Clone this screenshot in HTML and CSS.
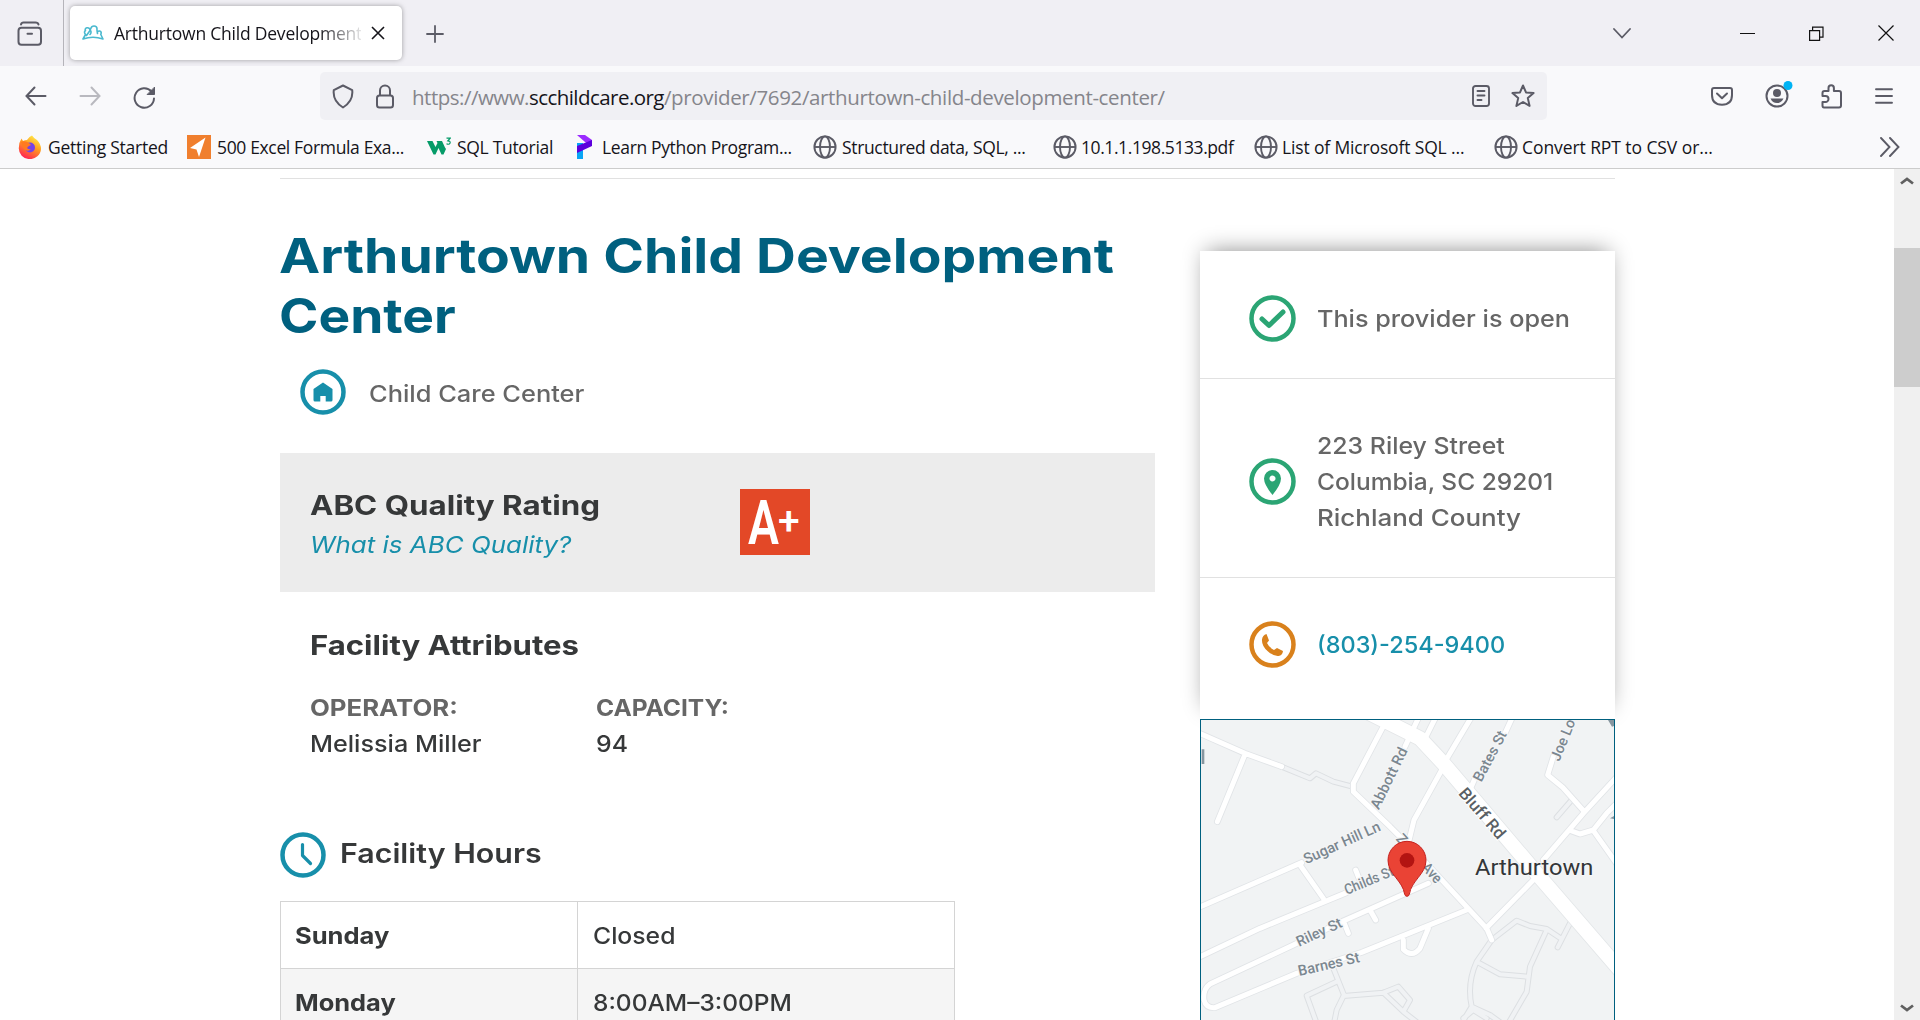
FILE: index.html
```html
<!DOCTYPE html>
<html lang="en">
<head>
<meta charset="utf-8">
<title>Arthurtown Child Development Center</title>
<link rel="stylesheet" href="styles.css">
</head>
<body>
<svg width="0" height="0" class="defs">
  <symbol id="globe" viewBox="0 0 24 24"><g fill="none" stroke="#5b5b66" stroke-width="1.9"><circle cx="12" cy="12" r="10.6"/><ellipse cx="12" cy="12" rx="5" ry="10.6"/><path d="M1.4 12h21.2"/></g></symbol>
</svg>
<header class="browser">
  <div class="tabs">
    <div class="recent"><svg width="26" height="26" viewBox="0 0 26 26" fill="none" stroke="#5b5b66" stroke-width="2" stroke-linecap="round"><path d="M4 3.600Q4.500 1.500 6.500 1.500H18.500Q21 1.500 21.500 3.600"/><rect x="1.500" y="6.800" width="22.500" height="17" rx="3"/><path d="M10.500 12.800h4.500"/></svg></div>
    <div class="tab">
      <svg width="22" height="16" viewBox="0 0 22 16" fill="none" stroke="#4bb9cf" stroke-width="1.600" stroke-linejoin="round" stroke-linecap="round"><path d="M1 14L3.500 9.500Q1.500 7 3.500 5.500 2.500 3.500 5 2.800 8 2.500 8 5.500L4.500 10.500M8 9.500Q9.500 8 8.800 6 7.800 5 8.800 3.500 9.500 1 12 1 15 1 15 3.800 14.800 5.500 15.500 8.500M15.500 8.500Q15 5.800 17.500 6 20 6.500 18.800 9.500L21 14Q11 10.500 1 14"/></svg>
      <span class="tab-title">Arthurtown Child Development</span>
      <svg width="14" height="14" viewBox="0 0 14 14" stroke="#15141a" stroke-width="1.600"><path d="M1 1L13 13M13 1L1 13"/></svg>
    </div>
    <svg class="plus" width="18" height="18" viewBox="0 0 18 18" stroke="#5b5b66" stroke-width="1.800" stroke-linecap="round"><path d="M9 1v16M1 9h16"/></svg>
    <div class="window-buttons">
      <svg class="chev" width="18" height="11" viewBox="0 0 18 11" fill="none" stroke="#5b5b66" stroke-width="1.800" stroke-linecap="round"><path d="M1 1L9 9.500 17 1"/></svg>
      <svg width="15" height="15" viewBox="0 0 15 15" stroke="#111"><path d="M0 7.500h15"/></svg>
      <svg width="15" height="15" viewBox="0 0 15 15" fill="none" stroke="#111" stroke-width="1.200"><path d="M.6 4.600h10v9.800h-10zM3.600 4.500V1.100h10.400v10h-3"/></svg>
      <svg width="16" height="16" viewBox="0 0 16 16" stroke="#111" stroke-width="1.200"><path d="M.5.5l15 15M15.500.5l-15 15"/></svg>
    </div>
  </div>
  <div class="toolbar">
    <svg width="22" height="20" viewBox="0 0 22 20" fill="none" stroke="#5b5b66" stroke-width="2" stroke-linecap="round"><path d="M9.500 1.500L1.500 10l8 8.500M2 10h18.500"/></svg>
    <svg class="dim" width="22" height="20" viewBox="0 0 22 20" fill="none" stroke="#5b5b66" stroke-width="2" stroke-linecap="round"><path d="M12.500 1.500l8 8.500-8 8.500M20 10H1.500"/></svg>
    <svg class="reload" width="23" height="23" viewBox="0 0 23 23" fill="none" stroke="#5b5b66" stroke-width="2" stroke-linecap="round"><path d="M18.500 5.500A9.700 9.700 0 1 0 21 12.500"/><path d="M21.500 1.500v7h-7z" fill="#5b5b66" stroke-width="1"/></svg>
    <div class="url">
      <svg width="22" height="25" viewBox="0 0 22 25" fill="none" stroke="#5b5b66" stroke-width="2" stroke-linejoin="round"><path d="M11 1.500L20.200 6.200Q21.500 17 11 23.500 .5 17 1.800 6.200z"/></svg>
      <svg class="lock" width="18" height="25" viewBox="0 0 18 25" fill="none" stroke="#5b5b66" stroke-width="2"><rect x="1" y="11.500" width="16" height="12" rx="2.500"/><path d="M4 11.500V6.500a5 5 0 0 1 10 0v5"/></svg>
      <div class="address"><span class="a1">https://www.</span><span class="a2">scchildcare.org</span><span class="a3">/provider/7692/arthurtown-child-development-center/</span></div>
      <svg width="18" height="22" viewBox="0 0 18 22" fill="none" stroke="#5b5b66" stroke-width="1.900" stroke-linecap="round"><rect x="1" y="1" width="16" height="20" rx="2.500"/><path d="M5.500 6h7M5.500 10.500h7M5.500 15h4"/></svg>
      <svg class="star" width="24" height="24" viewBox="0 0 24 24" fill="none" stroke="#5b5b66" stroke-width="2" stroke-linejoin="round"><path d="M12 1.500l3 6.900 7.600.7-5.800 5 1.800 7.800L12 18l-6.600 3.900 1.800-7.800-5.800-5 7.600-.7z"/></svg>
    </div>
    <svg width="22" height="19" viewBox="0 0 22 19" fill="none" stroke="#5b5b66" stroke-width="2" stroke-linecap="round" stroke-linejoin="round"><path d="M3 1h16q2 0 2 2v5q0 9.500-10 9.800Q1 17.500 1 8V3q0-2 2-2z"/><path d="M6 6.500l5 4.800 5-4.800"/></svg>
    <svg class="account" width="30" height="32" viewBox="0 0 30 32"><circle cx="12" cy="18" r="10.500" fill="none" stroke="#5b5b66" stroke-width="2"/><circle cx="12" cy="15" r="4" fill="#5b5b66"/><path d="M5.500 20.500h13q-2 4.500-6.500 4.500t-6.500-4.500z" fill="#5b5b66"/><circle cx="23" cy="7.500" r="4.500" fill="#00b3f4"/></svg>
    <svg class="puzzle" width="21" height="25" viewBox="0 0 21 25" fill="none" stroke="#5b5b66" stroke-width="2" stroke-linejoin="round"><path d="M1.500 11V9q0-2 2-2H7.500V4a2.700 2.700 0 0 1 5.400 0v3H18q2 0 2 2v12.500q0 2-2 2H3q-1.500 0-1.500-2V18h3a2.600 2.600 0 0 0 0-6h-3z"/></svg>
    <svg class="menu" width="18" height="16" viewBox="0 0 18 16" stroke="#5b5b66" stroke-width="1.900" stroke-linecap="round"><path d="M1 1.300h16M1 8h16M1 14.700h16"/></svg>
  </div>
  <nav class="bookmarks">
    <span class="bm b1"><svg viewBox="0 0 24 24"><defs><linearGradient id="ff" x1=".8" y1="0" x2=".3" y2="1"><stop offset="0" stop-color="#fff44f"/><stop offset=".45" stop-color="#ff9a1f"/><stop offset="1" stop-color="#ff1f55"/></linearGradient></defs><path d="M14 .5q2 3 5 4.500 4 4 4 9A11 10.500 0 0 1 .8 13Q1 7 3.500 3.500L5 6q2-1 4-1 2.500-4 5-4.500z" fill="url(#ff)"/><circle cx="12" cy="12.500" r="5" fill="#7542e5"/><path d="M3 7q4-2 8 1l2 2q-3 1-4 3 2 2 4 1-2 3-6 1-3-3-4-8z" fill="#ff7a20"/></svg>Getting Started</span>
    <span class="bm b2"><svg viewBox="0 0 24 24"><path fill="#f07f2e" d="M0 0h24v24H0z"/><path fill="#fff" d="M18.500 2.500L3 13l6.500 1.500L12 22z"/></svg>500 Excel Formula Exa...</span>
    <span class="bm b3"><svg viewBox="0 0 24 24"><path fill="#059b68" d="M0 6h5.500l3 6 2-4L9.500 6H15l3 6.500 1 1.500-2.500 5.500h-2L11.500 13 8.500 19.500h-2z"/><path d="M19.500 3.200h3.700l-2.300 2.600q2.600.2 2.200 2.200-.9 2-3.600.8" fill="none" stroke="#059b68" stroke-width="1.200"/></svg>SQL Tutorial</span>
    <span class="bm b4"><svg viewBox="0 0 24 24"><path fill="#09a5f5" d="M4 8h6v16H4z"/><path fill="#9b2bff" d="M4 0h8l7 5v6l-7-4z"/><path fill="#5c00dc" d="M4 11l15-6v6L4 18z"/></svg>Learn Python Program...</span>
    <span class="bm b5"><svg><use href="#globe"/></svg>Structured data, SQL, ...</span>
    <span class="bm b6"><svg><use href="#globe"/></svg>10.1.1.198.5133.pdf</span>
    <span class="bm b7"><svg><use href="#globe"/></svg>List of Microsoft SQL ...</span>
    <span class="bm b8"><svg><use href="#globe"/></svg>Convert RPT to CSV or...</span>
    <svg class="more" width="20" height="20" viewBox="0 0 20 20" fill="none" stroke="#5b5b66" stroke-width="1.900" stroke-linecap="round"><path d="M1 1l8.500 9L1 19M10 1l8.500 9L10 19"/></svg>
  </nav>
</header>
<div class="viewport">
  <div class="page">
    <main>
      <h1><span class="t1">Arthurtown Child Development</span><span class="t2">Center</span></h1>
      <div class="kind">
        <svg width="46" height="46" viewBox="0 0 46 46"><circle cx="23" cy="23" r="20.500" fill="none" stroke="#178faa" stroke-width="4.500"/><path fill="#178faa" d="M23 13.500l9.500 6.500v11q0 1.500-1.500 1.500h-5.300v-5.500h-5.400v5.500H15q-1.500 0-1.500-1.500V20z"/></svg>
        <span class="txt t3">Child Care Center</span>
      </div>
      <section class="rating">
        <div class="rating-text"><h2 class="t4">ABC Quality Rating</h2><a class="t5">What is ABC Quality?</a></div>
        <div class="badge"><span class="badge-a">A</span><span class="badge-plus">+</span></div>
      </section>
      <section class="attributes">
        <h2 class="t6">Facility Attributes</h2>
        <dl>
          <div class="attr"><dt class="t7">OPERATOR:</dt><dd class="t8">Melissia Miller</dd></div>
          <div class="attr"><dt class="t9">CAPACITY:</dt><dd class="t10">94</dd></div>
        </dl>
      </section>
      <section>
        <div class="hours-head">
          <svg width="46" height="46" viewBox="0 0 46 46" fill="none" stroke="#178faa"><circle cx="23" cy="23" r="20.500" stroke-width="4.500"/><path d="M22.500 12.500V23.500L30.500 31.500" stroke-width="3.200" stroke-linecap="round" stroke-linejoin="round"/></svg>
          <h2 class="t11">Facility Hours</h2>
        </div>
        <div class="hours">
          <div class="row"><div class="day"><span class="t12">Sunday</span></div><div class="time"><span class="t13">Closed</span></div></div>
          <div class="row alt"><div class="day"><span class="t14">Monday</span></div><div class="time"><span class="t15">8:00AM–3:00PM</span></div></div>
        </div>
      </section>
    </main>
    <aside>
      <div class="card">
        <div class="item i1"><svg width="47" height="47" viewBox="0 0 47 47" fill="none" stroke="#2ba574"><circle cx="23.500" cy="23.500" r="21" stroke-width="4.500"/><path d="M13 24l7 6.500L34 17" stroke-width="5" stroke-linecap="round" stroke-linejoin="round"/></svg><span class="t16">This provider is open</span></div>
        <div class="item i2"><svg width="47" height="47" viewBox="0 0 47 47"><circle cx="23.500" cy="23.500" r="21" stroke-width="4.500" fill="none" stroke="#2ba574"/><path fill="#2ba574" fill-rule="evenodd" d="M23.500 12a8.500 8.500 0 0 1 8.500 8.500q0 6-8.500 16.500Q15 26.500 15 20.500A8.500 8.500 0 0 1 23.500 12zm0 5.500a3 3 0 1 0 .01 0z"/></svg><div class="lines"><span class="t17">223 Riley Street</span><span class="t18">Columbia, SC 29201</span><span class="t19">Richland County</span></div></div>
        <div class="item i3"><svg width="47" height="47" viewBox="0 0 47 47"><circle cx="23.500" cy="23.500" r="21" stroke-width="4.500" fill="none" stroke="#d9811c"/><path fill="#d9811c" d="M17.500 13l2.500 6.500-2 2.500q2 4.500 7 7l3-2 6 3q-.5 4.500-4.500 5-5 .5-11-5t-5.500-11.500q.5-4.500 4.500-5.500z"/></svg><a class="t20">(803)-254-9400</a></div>
      </div>
      <div class="map">
        <svg width="413" height="300" viewBox="33 30 1239 900">
          <defs>
            <path id="streets" d="M20 66L165 130 275 170M165 133L82 335M582 45L490 220V245L600 350 700 450 890 655 905 690M687 20L645 110M738 20L703 90M845 20L768 150M758 175L672 330 655 400M968 20L945 70M855 205L842 235M1090 140L1073 195 1118 232 1183 305M1290 190L1180 310 1060 450M1035 505L888 655M1145 363L1170 372 1210 360 1250 310 1290 270M1210 362L1290 475M20 595L335 458M330 465L400 565M20 745L210 655 470 548M715 520L455 635 310 705 60 822Q38 838 42 870 48 895 75 893L320 790 515 727 830 600M540 600L557 630M463 640L475 670M497 480L507 505M715 655L690 715Q665 745 640 718V690"/>
            <path id="lanes" d="M275 170L360 205 378 190 430 215 487 230M905 690L980 632 1020 648 1070 657 1112 685M1145 630L1103 712M1070 660L1020 770 1010 845 955 940M905 690L860 755Q830 820 845 890L815 940M860 755L930 793 1012 800M845 890L900 915 935 940M820 925L850 900 890 925M430 775L462 855 440 900 432 940M440 815L350 857 380 940M460 858L580 848 625 830 660 870 640 905M580 848L640 905 685 940M1145 270L1100 322"/>
            <path id="bluff" d="M530 5Q590 35 690 85L760 160 1040 490 1290 780"/>
          </defs>
          <path fill="#f1f3f4" d="M0 0h1300v960H0z"/>
          <g fill="none" stroke-linejoin="round" stroke-linecap="round">
            <use href="#lanes" stroke="#dcdfe2" stroke-width="18"/><use href="#lanes" stroke="#f0f2f4" stroke-width="12"/>
            <use href="#streets" stroke="#e1e4e7" stroke-width="20"/><use href="#bluff" stroke="#e3e6e8" stroke-width="48"/>
            <use href="#streets" stroke="#fff" stroke-width="15"/><use href="#bluff" stroke="#fff" stroke-width="43"/>
          </g>
          <path fill="#8796a0" d="M35 118h8v44h-8zM1254 30h18v18l-6 2zM1260 325l12-7v9z"/>
          <g class="streetnames">
            <text transform="translate(349 463) rotate(-24.500)" textLength="248" lengthAdjust="spacingAndGlyphs">Sugar Hill Ln</text>
            <text transform="translate(566 301) rotate(-64)" textLength="200" lengthAdjust="spacingAndGlyphs">Abbott Rd</text>
            <text transform="translate(874 218) rotate(-62)" textLength="165" lengthAdjust="spacingAndGlyphs">Bates St</text>
            <text transform="translate(1108 156) rotate(-68)" textLength="131" lengthAdjust="spacingAndGlyphs">Joe Lo</text>
            <text transform="translate(470 555) rotate(-22.500)" textLength="157" lengthAdjust="spacingAndGlyphs">Childs St</text>
            <text transform="translate(327 711) rotate(-25)" textLength="146" lengthAdjust="spacingAndGlyphs">Riley St</text>
            <text transform="translate(328 798) rotate(-13)" textLength="188" lengthAdjust="spacingAndGlyphs">Barnes St</text>
            <text transform="translate(616 388) rotate(48)">Z</text>
            <text transform="translate(693 474) rotate(48)" textLength="66" lengthAdjust="spacingAndGlyphs">Ave</text>
          </g>
          <text class="main-road" transform="translate(803 251) rotate(49)" textLength="185" lengthAdjust="spacingAndGlyphs">Bluff Rd</text>
          <text class="place" x="855" y="494" textLength="355" lengthAdjust="spacingAndGlyphs">Arthurtown</text>
          <path fill="#ea4335" stroke="#c5221f" stroke-width="3" d="M651 394a57 57 0 0 1 57 57c0 42-44 60-50 102q-2 6-7 6t-7-6c-6-42-50-60-50-102a57 57 0 0 1 57-57z"/><circle cx="651" cy="451" r="22" fill="#b31412"/>
        </svg>
      </div>
    </aside>
  </div>
  <div class="scrollbar">
    <svg width="14" height="8" viewBox="0 0 14 8" fill="none" stroke="#606060" stroke-width="2.800"><path d="M1 6.500L7 2l6 4.500"/></svg>
    <div class="thumb"></div>
    <svg class="down" width="14" height="8" viewBox="0 0 14 8" fill="none" stroke="#606060" stroke-width="2.800"><path d="M1 1.500L7 6l6-4.500"/></svg>
  </div>
</div>
</body>
</html>
```

FILE: styles.css
```css
* { box-sizing: border-box; }
body {
  margin: 0;
  height: 1020px;
  overflow: hidden;
  display: flex;
  flex-direction: column;
  background: #fff;
  font: 450 23px/36px Inter, "Liberation Sans", sans-serif;
  color: #363839;
}
svg { display: block; flex: none; }
.defs { display: none; }
h1, h2, dl, dd { margin: 0; }

/* Browser chrome */
.browser {
  height: 169px;
  flex: none;
  background: #f9f9fb;
  border-bottom: 1px solid #ccc;
  font: 17.5px/24px "Open Sans", sans-serif;
  color: #15141a;
}
.tabs { height: 66px; background: #f0eff4; display: flex; align-items: center; padding-right: 26px; }
.recent { width: 64px; height: 66px; padding: 21px 0 0 17px; border-right: 1px solid #b5b4ba; }
.tab {
  width: 332px;
  height: 54px;
  margin-left: 6px;
  padding: 0 17px 0 12px;
  display: flex;
  align-items: center;
  background: #fff;
  border-radius: 5px;
  box-shadow: 0 0 5px rgba(0, 0, 0, .35);
}
.tab-title {
  flex: 1;
  margin: 0 10px;
  overflow: hidden;
  white-space: nowrap;
  letter-spacing: -.22px;
  -webkit-mask-image: linear-gradient(90deg, #000 83%, transparent 102%);
  mask-image: linear-gradient(90deg, #000 83%, transparent 102%);
}
.plus { margin: 2px 0 0 24px; }
.window-buttons { margin-left: auto; display: flex; align-items: center; gap: 54px; }
.chev { margin-right: 55px; }
.toolbar { height: 60px; padding-left: 25px; display: flex; align-items: center; gap: 32px; }
.dim { opacity: .4; }
.reload { margin-top: 2px; }
.url {
  width: 1227px;
  height: 48px;
  margin: 0 132px 0 132px;
  padding: 0 12px;
  display: flex;
  align-items: center;
  background: #f0f0f4;
  border-radius: 5px;
}
.lock { margin: 0 18px 0 22px; }
.address { flex: 1; display: flex; padding-top: 1px; font-size: 20.5px; color: #85858b; }
.a1 { letter-spacing: -.5px; }
.a2 { letter-spacing: -.55px; color: #15141a; }
.a3 { letter-spacing: -.36px; }
.star { margin-left: 21px; }
.account { margin: -4px -6px 0 0; }
.menu { margin-left: 1px; }
.bookmarks {
  height: 42px;
  padding-left: 18px;
  display: grid;
  grid-template-columns: 169px 240px 146px 240px 240px 201px 240px 386px 20px;
  align-items: center;
}
.bm { display: flex; align-items: center; gap: 6px; white-space: nowrap; }
.bm svg { width: 24px; height: 24px; }
.b1 { letter-spacing: -.25px; }
.b2 { letter-spacing: -.35px; }
.b3 { letter-spacing: -.31px; }
.b4 { letter-spacing: -.35px; gap: 5px; }
.b5 { letter-spacing: -.34px; gap: 5px; }
.b6 { letter-spacing: -.42px; gap: 4px; }
.b7 { letter-spacing: -.15px; gap: 4px; }
.b8 { letter-spacing: -.08px; gap: 4px; }

/* Page */
.viewport { flex: 1; min-height: 0; display: flex; justify-content: space-between; overflow: hidden; }
.page {
  width: 1335px;
  margin: 9px 0 0 280px;
  border-top: 1px solid #e1e1e1;
  display: grid;
  grid-template-columns: 875px 415px;
  column-gap: 45px;
  align-items: start;
}
main { padding-top: 47px; }
aside { padding-top: 72px; }
[class^="t"], .txt { white-space: nowrap; transform-origin: 0 50%; }
h1 { margin-left: -1px; font-size: 48px; line-height: 60px; font-weight: 700; color: #00607f; }
h1 span { display: block; }
h2 { font-size: 27px; line-height: 40px; font-weight: 700; }
.kind { height: 46px; margin: 23px 0 38px 20px; display: flex; align-items: center; gap: 23px; color: #666; }
.kind .txt { padding-top: 3px; }
.rating { height: 139px; padding: 33px 30px 0; background: #ececec; display: flex; }
.rating-text { width: 430px; }
.rating a { display: block; width: max-content; line-height: 38px; font-style: italic; color: #178faa; }
.badge {
  width: 70px;
  height: 66px;
  margin-top: 3px;
  display: flex;
  align-items: center;
  justify-content: center;
  background: #e34827;
  color: #fff;
  font-family: Roboto, sans-serif;
  font-weight: 500;
}
.badge-a { font-size: 61px; line-height: 66px; font-weight: 600; transform: scaleX(.76); margin: 2px -6px 0 -7px; }
.badge-plus { font-size: 39px; line-height: 58px; margin-top: -3px; }
.attributes { padding: 34px 30px 0; }
dl { display: flex; margin-top: 24px; }
.attr { width: 286px; }
dt { font-weight: 700; color: #666; }
.hours-head { height: 46px; margin-top: 70px; display: flex; align-items: center; gap: 14px; }
.hours-head h2 { font-weight: 600; margin-top: -2px; }
.hours { width: 675px; margin-top: 23px; border: 1px solid #d4d4d4; border-bottom: 0; }
.row { height: 67px; display: flex; border-bottom: 1px solid #d4d4d4; }
.alt { background: #f5f5f5; }
.day, .time { display: flex; align-items: center; padding: 2px 0 0 15px; }
.day { width: 297px; padding-left: 14px; border-right: 1px solid #d4d4d4; font-weight: 700; }

/* Provider card */
.card { height: 468px; background: #fff; color: #666; box-shadow: 0 -6px 22px -7px rgba(0, 0, 0, .48); }
.item { display: flex; align-items: flex-start; gap: 21px; padding-left: 49px; border-bottom: 1px solid #e1e1e1; }
.i1 { height: 128px; padding-top: 44px; }
.i1 span, .i3 a { margin-top: 6px; }
.i2 { height: 199px; padding-top: 49px; }
.i2 svg { margin-top: 30px; }
.lines { display: flex; flex-direction: column; }
.i3 { padding-top: 43px; border: 0; }
.i3 a { color: #178faa; }
.map { height: 302px; border: 1px solid #00607f; border-bottom: 0; background: #f1f3f4; }
.map text { font-family: Roboto, sans-serif; }
.streetnames { font-size: 44px; font-weight: 500; fill: #7b8790; stroke: #f5f6f7; stroke-width: 7px; paint-order: stroke; }
.main-road { font-size: 50px; font-weight: 500; fill: #5a5f64; stroke: #fff; stroke-width: 6px; paint-order: stroke; }
.place { font-size: 68px; fill: #333639; stroke: #f5f6f7; stroke-width: 6px; paint-order: stroke; }

.scrollbar { width: 26px; background: #f0f0f0; display: flex; flex-direction: column; align-items: center; padding: 8px 0; }
.thumb { width: 26px; height: 139px; margin-top: 63px; background: #cdcdcd; }
.down { margin-top: auto; }

/* Width adjustments for the substitute typeface */
.t1 { transform: scaleX(1.149); }
.t2 { transform: scaleX(1.11); }
.t3 { transform: scaleX(1.105); }
.t4 { transform: scaleX(1.16); width: max-content; }
.t5 { transform: scaleX(1.127); }
.t6 { transform: scaleX(1.152); width: max-content; }
.t7 { transform: scaleX(1.12); }
.t8 { transform: scaleX(1.095); }
.t9 { transform: scaleX(1.065); }
.t10 { transform: scaleX(1.08); }
.t11 { transform: scaleX(1.125); }
.t12 { transform: scaleX(1.11); }
.t13 { transform: scaleX(1.075); }
.t14 { transform: scaleX(1.105); }
.t15 { transform: scaleX(1.065); }
.t16 { transform: scaleX(1.096); }
.t17 { transform: scaleX(1.08); }
.t18 { transform: scaleX(1.065); }
.t19 { transform: scaleX(1.128); }
.t20 { transform: scaleX(1.022); }
```
